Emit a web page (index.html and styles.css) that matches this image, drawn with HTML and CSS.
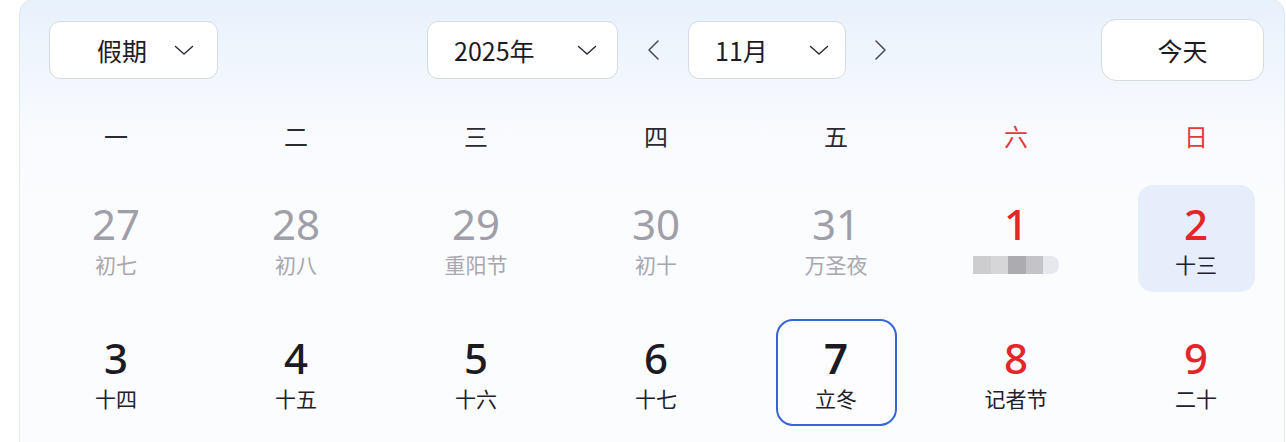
FILE: index.html
```html
<!DOCTYPE html>
<html lang="zh-CN">
<head>
<meta charset="utf-8">
<link rel="stylesheet" href="styles.css">
</head>
<body>
<div class="panel">
  <div class="header">
    <button class="select select-holiday">
      <span class="select-text">假期</span>
      <svg class="chev" width="20" height="11" viewBox="0 0 20 11"><path d="M1.5 1.5 L10 9 L18.5 1.5" fill="none" stroke="#2a2833" stroke-width="1.4" stroke-linecap="round" stroke-linejoin="round"/></svg>
    </button>
    <div class="center-group">
      <button class="select select-year">
        <span class="select-text">2025年</span>
        <svg class="chev" width="20" height="11" viewBox="0 0 20 11"><path d="M1.5 1.5 L10 9 L18.5 1.5" fill="none" stroke="#2a2833" stroke-width="1.4" stroke-linecap="round" stroke-linejoin="round"/></svg>
      </button>
      <span class="arrow">
        <svg width="14" height="22" viewBox="0 0 14 22"><path d="M12 2 L3 11 L12 20" fill="none" stroke="#4a4856" stroke-width="1.5" stroke-linecap="round" stroke-linejoin="round"/></svg>
      </span>
      <button class="select select-month">
        <span class="select-text">11月</span>
        <svg class="chev" width="20" height="11" viewBox="0 0 20 11"><path d="M1.5 1.5 L10 9 L18.5 1.5" fill="none" stroke="#2a2833" stroke-width="1.4" stroke-linecap="round" stroke-linejoin="round"/></svg>
      </button>
      <span class="arrow">
        <svg width="14" height="22" viewBox="0 0 14 22"><path d="M2 2 L11 11 L2 20" fill="none" stroke="#4a4856" stroke-width="1.5" stroke-linecap="round" stroke-linejoin="round"/></svg>
      </span>
    </div>
    <button class="today-btn">今天</button>
  </div>

  <div class="weekdays">
    <span>一</span><span>二</span><span>三</span><span>四</span><span>五</span><span class="red">六</span><span class="red">日</span>
  </div>

  <div class="grid">
    <div class="cell other"><span class="num">27</span><span class="lunar">初七</span></div>
    <div class="cell other"><span class="num">28</span><span class="lunar">初八</span></div>
    <div class="cell other"><span class="num">29</span><span class="lunar">重阳节</span></div>
    <div class="cell other"><span class="num">30</span><span class="lunar">初十</span></div>
    <div class="cell other"><span class="num">31</span><span class="lunar">万圣夜</span></div>
    <div class="cell weekend"><span class="num">1</span>
      <span class="lunar mosaic"><i class="m1"></i><i class="m2"></i><i class="m3"></i><i class="m4"></i><i class="m5"></i></span>
    </div>
    <div class="cell weekend selected"><span class="num">2</span><span class="lunar">十三</span></div>

    <div class="cell"><span class="num">3</span><span class="lunar">十四</span></div>
    <div class="cell"><span class="num">4</span><span class="lunar">十五</span></div>
    <div class="cell"><span class="num">5</span><span class="lunar">十六</span></div>
    <div class="cell"><span class="num">6</span><span class="lunar">十七</span></div>
    <div class="cell today"><span class="num">7</span><span class="lunar">立冬</span></div>
    <div class="cell weekend"><span class="num">8</span><span class="lunar">记者节</span></div>
    <div class="cell weekend"><span class="num">9</span><span class="lunar">二十</span></div>
  </div>
</div>
</body>
</html>
```

FILE: styles.css
```css
* { box-sizing: border-box; }

html, body {
  margin: 0;
  padding: 0;
  background: #ffffff;
  overflow: hidden;
}

body {
  font-family: "Noto Sans CJK SC", "Noto Sans", sans-serif;
  color: #1d1c26;
}

.panel {
  margin-left: 19px;
  margin-top: -2px;
  width: 1266px;
  height: 470px;
  border: 1px solid #e2e8f1;
  border-radius: 16px 16px 0 0;
  background: linear-gradient(to bottom, #e7f1fc 0px, #f1f6fd 70px, #f8fafe 130px, #fbfcfe 200px, #fbfcfe 100%);
  padding-top: 20px;
  padding-left: 6px;
}

.header {
  display: flex;
  align-items: center;
  height: 62px;
  padding-left: 23px;
  padding-right: 20px;
}

button {
  font-family: inherit;
  color: inherit;
  cursor: pointer;
}

.select {
  display: flex;
  align-items: center;
  height: 58px;
  border: 1px solid #d5dae3;
  border-radius: 11px;
  background: #ffffff;
  padding: 0;
  font-size: 25px;
}

.select-text {
  line-height: 1;
}

.select-holiday {
  width: 169px;
  padding-left: 47px;
}
.select-holiday .chev { margin-left: 27px; }

.center-group {
  display: flex;
  align-items: center;
  margin-left: 209px;
}

.select-year {
  width: 191px;
  padding-left: 26px;
}
.select-year .chev { margin-left: 42px; }

.select-month {
  width: 158px;
  padding-left: 26px;
}
.select-month .chev { margin-left: 41px; }

.arrow {
  display: flex;
  align-items: center;
  justify-content: center;
  width: 70px;
}

.today-btn {
  margin-left: auto;
  width: 163px;
  height: 62px;
  border: 1px solid #d5dae3;
  border-radius: 15px;
  background: #ffffff;
  font-size: 25px;
}

.weekdays {
  display: grid;
  grid-template-columns: repeat(7, 180px);
  margin-top: 35px;
  height: 40px;
  align-items: center;
  font-size: 24px;
  color: #2b2a33;
}
.weekdays span {
  text-align: center;
  line-height: 40px;
}
.weekdays .red { color: #e2393b; }

.grid {
  display: grid;
  grid-template-columns: repeat(7, 180px);
  grid-auto-rows: 107px;
  row-gap: 27px;
  margin-top: 29px;
}

.cell {
  justify-self: center;
  width: 117px;
  height: 107px;
  border-radius: 15px;
  display: flex;
  flex-direction: column;
  align-items: center;
  justify-content: center;
  gap: 8px;
}

.num {
  font-family: "Noto Sans", "Noto Sans CJK SC", sans-serif;
  font-size: 42px;
  line-height: 42px;
  font-weight: 500;
  color: #1c1b24;
}

.lunar {
  font-size: 21px;
  line-height: 22px;
  color: #22212b;
}

.other .num {
  font-weight: 400;
  color: #a09ea8;
}
.other .lunar {
  color: #a8a6ae;
}

.weekend .num { color: #e4252a; }

.selected {
  background: #e6edfb;
}

.today {
  width: 121px;
  border: 2px solid #3565d6;
  border-radius: 17px;
  background: #fdfdff;
}
.today .num { font-weight: 600; }

.mosaic {
  display: flex;
  width: 86px;
  height: 18px;
  margin-top: 3px;
  filter: blur(0.6px);
}
.mosaic i {
  display: block;
  height: 18px;
}
.mosaic .m1 { width: 18px; background: #cdcdd0; }
.mosaic .m2 { width: 17px; background: #d6d6d9; }
.mosaic .m3 { width: 18px; background: #acacb0; }
.mosaic .m4 { width: 17px; background: #c4c4c8; }
.mosaic .m5 { width: 16px; background: #e7e8ee; border-radius: 0 8px 8px 0; }
```
